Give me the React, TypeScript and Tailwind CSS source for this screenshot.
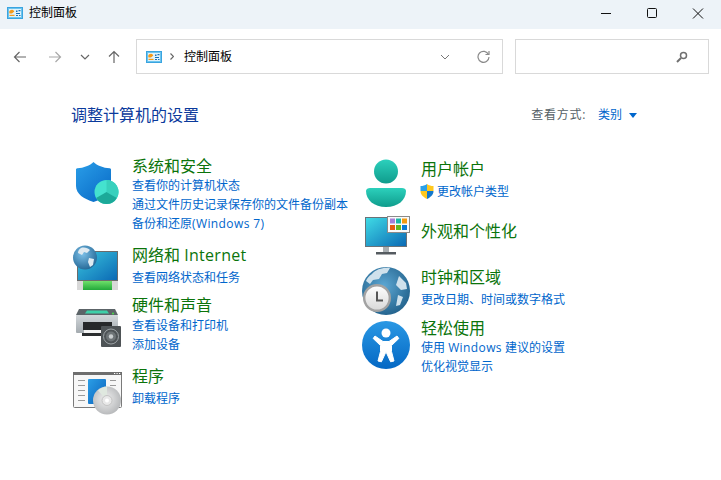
import React from "react";

const FONT = { fontFamily: '"Open Sans", "Noto Sans CJK SC", "Noto Sans", sans-serif' };

function CpIcon({ size = 16 }: { size?: number }) {
  return (
    <svg width={size} height={size * 0.75} viewBox="0 0 16 12">
      <rect x="0.5" y="0.5" width="15" height="11" fill="#6cc4ee" stroke="#3aa4e0" />
      <rect x="2" y="2" width="12" height="8" fill="#dff3fc" />
      <path d="M2.500 6.500a2.600 2.600 0 0 1 4.800-2L5 6.500z" fill="#f59a1b" />
      <rect x="2.500" y="7.800" width="5" height="1.200" fill="#f59a1b" />
      <path d="M9 3.500h1.500v1.500H9zM11.500 3h2v1.200h-2zM9 6h4v1H9zM9 8h2v1H9zM12 8h1.500v1H12z" fill="#1a6fb8" />
    </svg>
  );
}

function Shield() {
  return (
    <svg width="43" height="43" viewBox="0 0 43 43">
      <defs>
        <linearGradient id="sh" x1="0" y1="0" x2="0.8" y2="1">
          <stop offset="0" stopColor="#2a9ee8" />
          <stop offset="1" stopColor="#0a6cc8" />
        </linearGradient>
      </defs>
      <path d="M17.500 0c3.500 3.500 10 6 16 6.200.8 0 1.500.6 1.500 1.400V26c0 6-8 11-17.500 14C8 37 0 32 0 24V7.600C0 6.800.7 6.200 1.500 6.200 7.500 6 14 3.500 17.500 0z" fill="url(#sh)" />
      <circle cx="30.500" cy="30" r="12" fill="#44e2cf" />
      <path d="M30.500 30V18a12 12 0 0 1 10.400 18z" fill="#38d0bd" />
      <path d="M30.500 30l10.400 6a12 12 0 0 1-20.800 0z" fill="#1ca999" />
    </svg>
  );
}

function Network() {
  return (
    <svg width="48" height="46" viewBox="0 0 48 46">
      <defs>
        <linearGradient id="nw" x1="0" y1="0" x2="1" y2="1">
          <stop offset="0" stopColor="#3bc6de" />
          <stop offset="1" stopColor="#0a68b4" />
        </linearGradient>
        <linearGradient id="ng" x1="0" y1="0" x2="0" y2="1">
          <stop offset="0" stopColor="#6ee06a" />
          <stop offset="1" stopColor="#22a83a" />
        </linearGradient>
        <radialGradient id="gl" cx="0.4" cy="0.35" r="0.75">
          <stop offset="0" stopColor="#7cc0e8" />
          <stop offset="1" stopColor="#1c5f8e" />
        </radialGradient>
      </defs>
      <rect x="4.500" y="6.500" width="40" height="29" fill="url(#nw)" stroke="#6b6b6b" />
      <rect x="4" y="36" width="41" height="9" fill="url(#ng)" />
      <rect x="4" y="36" width="6" height="9" fill="#d8d8d8" />
      <rect x="39" y="36" width="6" height="9" fill="#d8d8d8" />
      <circle cx="12" cy="12.500" r="12" fill="url(#gl)" />
      <path d="M8 3c3-1 7 0 9 2l-3 3-3-1-2 3-4-2c0-2 1-4 3-5zM16 13l5 1-1 6-3 2-2-5z" fill="#dfeaf1" />
    </svg>
  );
}

function Hardware() {
  return (
    <svg width="46" height="38" viewBox="0 0 46 38">
      <defs>
        <linearGradient id="pb" x1="0" y1="0" x2="0" y2="1">
          <stop offset="0" stopColor="#d2d7da" />
          <stop offset="1" stopColor="#a4abb0" />
        </linearGradient>
      </defs>
      <path d="M3 0h36l3 6H0z" fill="#5c6468" />
      <path d="M11 1.500h20l2 3H9z" fill="#3ed0a8" />
      <circle cx="37" cy="4.500" r="1" fill="#48e048" />
      <rect x="0" y="6" width="42" height="18" rx="1" fill="url(#pb)" />
      <rect x="7" y="13" width="29" height="8" fill="#26282a" />
      <rect x="8" y="21" width="26" height="3" fill="#f4f4f4" />
      <rect x="6" y="24" width="30" height="3" fill="#2c2e30" />
      <rect x="25" y="17" width="20" height="21" rx="1" fill="#4e5356" />
      <circle cx="35" cy="27.500" r="7.500" fill="none" stroke="#9da3a6" />
      <circle cx="35" cy="27.500" r="5" fill="#6e7477" />
      <circle cx="35" cy="27.500" r="2.200" fill="#c9cdcf" />
    </svg>
  );
}

function Programs() {
  return (
    <svg width="49" height="43" viewBox="0 0 49 43">
      <defs>
        <linearGradient id="pg" x1="0" y1="0" x2="1" y2="1">
          <stop offset="0" stopColor="#2b9ee6" />
          <stop offset="1" stopColor="#0a62bc" />
        </linearGradient>
        <radialGradient id="cd" cx="0.45" cy="0.45" r="0.6">
          <stop offset="0" stopColor="#f0f0f0" />
          <stop offset="1" stopColor="#b4b6b8" />
        </radialGradient>
      </defs>
      <rect x="0.500" y="0.500" width="48" height="35" rx="1" fill="#f7f7f7" stroke="#7a7a7a" />
      <rect x="0" y="0" width="49" height="3" fill="#6e6e6e" />
      <rect x="41" y="1" width="1.200" height="1" fill="#fff" />
      <rect x="43.500" y="1" width="1.200" height="1" fill="#fff" />
      <rect x="46" y="1" width="1.200" height="1" fill="#fff" />
      {[8, 13, 18, 23, 28].map((y) => (
        <rect key={y} x="5" y={y} width="7" height="1" fill="#9a9a9a" />
      ))}
      {[8, 13, 18].map((y) => (
        <rect key={y} x="37" y={y} width="6" height="1" fill="#9a9a9a" />
      ))}
      <rect x="15" y="7" width="18" height="25" rx="1" fill="url(#pg)" />
      <circle cx="34" cy="28.500" r="14" fill="url(#cd)" />
      <path d="M34 28.500l-9-10a14 14 0 0 1 9-4z" fill="#dfe8df" />
      <circle cx="34" cy="28.500" r="5" fill="#e8e8e8" stroke="#c4c4c4" />
      <circle cx="34" cy="28.500" r="2" fill="#fff" />
    </svg>
  );
}

function User() {
  return (
    <svg width="40" height="49" viewBox="0 0 40 49">
      <defs>
        <linearGradient id="us" x1="0" y1="0" x2="0" y2="1">
          <stop offset="0" stopColor="#2cd0bc" />
          <stop offset="1" stopColor="#0f9c8c" />
        </linearGradient>
      </defs>
      <circle cx="20" cy="12.500" r="12" fill="url(#us)" />
      <path d="M4 29h32c2 0 4 1 4 3 0 9-8 16-20 16S0 41 0 32c0-2 2-3 4-3z" fill="url(#us)" />
    </svg>
  );
}

function UacShield() {
  return (
    <svg width="14" height="15" viewBox="0 0 14 15" className="shrink-0">
      <path d="M7 0C5 1.500 3 2 .5 2v5H7z" fill="#2aa0e8" />
      <path d="M7 0c2 1.500 4 2 6.500 2v5H7z" fill="#ffc81e" />
      <path d="M.5 7C.5 11 4 13.500 7 15V7z" fill="#ffc81e" />
      <path d="M13.500 7c0 4-3.500 6.500-6.500 8V7z" fill="#1478cc" />
    </svg>
  );
}

function Monitor() {
  return (
    <svg width="46" height="39" viewBox="0 0 46 39">
      <defs>
        <linearGradient id="mn" x1="0" y1="0" x2="1" y2="1">
          <stop offset="0" stopColor="#40dce6" />
          <stop offset="1" stopColor="#0a68b4" />
        </linearGradient>
      </defs>
      <rect x="0.500" y="1.500" width="41" height="29" fill="url(#mn)" stroke="#6a7278" />
      <rect x="18" y="31" width="6" height="5" fill="#a8aeb2" />
      <rect x="11" y="36" width="20" height="2.500" fill="#555b60" />
      <rect x="22.500" y="0.500" width="22" height="16" fill="#fafafa" stroke="#8a8a8a" />
      <rect x="25" y="2.500" width="5" height="5" fill="#a67fd8" />
      <rect x="31" y="2.500" width="5" height="5" fill="#1cb8a8" />
      <rect x="37" y="2.500" width="5" height="5" fill="#f39a10" />
      <rect x="25" y="9" width="5" height="5" fill="#e85c10" />
      <rect x="31" y="9" width="5" height="5" fill="#66b81c" />
      <rect x="37" y="9" width="5" height="5" fill="#0a7ad4" />
    </svg>
  );
}

function Clock() {
  return (
    <svg width="48" height="48" viewBox="0 0 48 48">
      <defs>
        <radialGradient id="gb" cx="0.45" cy="0.4" r="0.7">
          <stop offset="0" stopColor="#5da8d4" />
          <stop offset="1" stopColor="#1c5a84" />
        </radialGradient>
        <linearGradient id="cf" x1="0" y1="0" x2="0" y2="1">
          <stop offset="0" stopColor="#ffffff" />
          <stop offset="1" stopColor="#d8d8d8" />
        </linearGradient>
      </defs>
      <circle cx="24" cy="24" r="24" fill="url(#gb)" />
      <path d="M10 7c4-5 12-7 18-6l-3 5-5 1-3 5-6 1-3 4-4-3c1-3 3-5 6-7zM37 9l7 7 1 6-6 1-5-5zM36 28l5 2-3 8-4 1z" fill="#cfe1ec" />
      <circle cx="15" cy="31" r="12.800" fill="url(#cf)" stroke="#a2a2a2" strokeWidth="2.400" />
      <path d="M15 24.500v9h6" fill="none" stroke="#555" strokeWidth="2" />
    </svg>
  );
}

function Access() {
  return (
    <svg width="48" height="48" viewBox="0 0 48 48">
      <defs>
        <linearGradient id="ac" x1="0" y1="0" x2="0" y2="1">
          <stop offset="0" stopColor="#2a98e4" />
          <stop offset="1" stopColor="#0468c4" />
        </linearGradient>
      </defs>
      <circle cx="24" cy="24" r="24" fill="url(#ac)" />
      <circle cx="24" cy="12" r="4.500" fill="#fff" />
      <path d="M13 15l8 5.500h6l8-5.500 1.800 2.500-7.300 7v6l2.500 9.500-3.400.8-4.600-10-4.600 10-3.400-.8 2.500-9.500v-6l-7.300-7z" fill="#fff" stroke="#fff" strokeLinejoin="round" strokeWidth="1" />
    </svg>
  );
}

const A = ({ children }: { children: React.ReactNode }) => (
  <div className="h-[19px] text-[12px] leading-[19px] whitespace-nowrap text-[#0066cc]">{children}</div>
);

const H = ({ children }: { children: React.ReactNode }) => (
  <div className="h-[22px] text-[16px] leading-[22px] whitespace-nowrap text-[#0b740b]">{children}</div>
);

function Item({
  icon,
  title,
  links,
  className,
  linksClass,
}: {
  icon: React.ReactNode;
  title: React.ReactNode;
  links: React.ReactNode[];
  className: string;
  linksClass?: string;
}) {
  return (
    <div className={`flex ${className}`}>
      <div className="flex w-[61px] shrink-0 justify-start">{icon}</div>
      <div>
        <H>{title}</H>
        <div className={linksClass}>
          {links.map((l, i) => (
            <A key={i}>{l}</A>
          ))}
        </div>
      </div>
    </div>
  );
}

export default function App() {
  return (
    <div className="flex h-[480px] w-[721px] flex-col overflow-hidden bg-white" style={FONT}>
      <div className="flex h-[29px] items-center bg-[#edf3f8] pl-[7px]">
        <div className="-mt-[3px] flex items-center">
          <CpIcon />
          <span className="ml-[6px] text-[12px] leading-[16px] text-black">控制面板</span>
        </div>
        <div className="ml-auto flex items-center">
          <svg width="46" height="29" viewBox="0 0 46 29">
            <path d="M18 13.500h10" stroke="#111" strokeWidth="1" />
          </svg>
          <svg width="46" height="29" viewBox="0 0 46 29">
            <rect x="18.500" y="8.500" width="9" height="9" rx="1" fill="none" stroke="#111" />
          </svg>
          <svg width="46" height="29" viewBox="0 0 46 29">
            <path d="M18 8.500l10 10M28 8.500l-10 10" stroke="#111" strokeWidth="1" fill="none" />
          </svg>
        </div>
      </div>

      <div className="mt-[10px] flex h-[35px] items-center">
        <div className="ml-[13px] flex w-[123px] items-center">
          <svg width="14" height="14" viewBox="0 0 14 14" fill="none" stroke="#666" strokeWidth="1.200">
            <path d="M13 7H1.500M6.500 2l-5 5 5 5" />
          </svg>
          <svg width="14" height="14" viewBox="0 0 14 14" fill="none" stroke="#a8a8a8" strokeWidth="1.200" className="ml-[21px]">
            <path d="M1 7h11.500M7.500 2l5 5-5 5" />
          </svg>
          <svg width="10" height="6" viewBox="0 0 10 6" fill="none" stroke="#666" strokeWidth="1.200" className="ml-[18px]">
            <path d="M1 1l4 4 4-4" />
          </svg>
          <svg width="14" height="14" viewBox="0 0 14 14" fill="none" stroke="#666" strokeWidth="1.200" className="ml-[17px]">
            <path d="M7 13V1.500M2 6.500l5-5 5 5" />
          </svg>
        </div>
        <div className="flex h-[35px] w-[367px] items-center border border-[#d9d9d9] pl-[9px]">
          <CpIcon />
          <svg width="4" height="7" viewBox="0 0 4 7" className="ml-[8px]" fill="none" stroke="#666" strokeWidth="1.200">
            <path d="M.5.500l3 3-3 3" />
          </svg>
          <span className="ml-[10px] text-[12px] leading-[16px] text-black">控制面板</span>
          <svg width="10" height="6" viewBox="0 0 10 6" fill="none" stroke="#777" strokeWidth="1" className="ml-[208px]">
            <path d="M1 1l4 4 4-4" />
          </svg>
          <svg width="13" height="13" viewBox="0 0 13 13" fill="none" stroke="#8a8a8a" strokeWidth="1.200" className="ml-[27px]">
            <path d="M11.500 4.500A5.500 5.500 0 1 0 12 7" />
            <path d="M8.500 4.500h3.500V1" />
          </svg>
        </div>
        <div className="ml-[12px] flex h-[35px] w-[194px] items-center justify-end border border-[#d9d9d9] pr-[20px]">
          <svg width="12" height="12" viewBox="0 0 12 12" fill="none" stroke="#707070">
            <circle cx="7.500" cy="4.500" r="3" strokeWidth="1.500" />
            <path d="M5 7l-4 4" strokeWidth="2" />
          </svg>
        </div>
      </div>

      <div className="ml-[71px] mt-[30px] flex h-[22px] w-[566px] items-center">
        <span className="text-[16px] leading-[22px] text-[#0b3a9c]">调整计算机的设置</span>
        <span className="ml-auto text-[12px] leading-[16px] tracking-[0.7px] text-[#555f66]">查看方式:</span>
        <span className="ml-[12px] text-[12px] leading-[16px] text-[#0066cc]">类别</span>
        <svg width="8" height="5" viewBox="0 0 8 5" className="ml-[7px]">
          <path d="M0 0h8L4 5z" fill="#0066cc" />
        </svg>
      </div>

      <div className="ml-[71px] mt-[29px] flex">
        <div className="w-[289px]">
          <Item
            className="h-[89px]"
            icon={<div className="mt-[7px] ml-[5px]"><Shield /></div>}
            title="系统和安全"
            linksClass="-mt-[1px]"
            links={[
              "查看你的计算机状态",
              "通过文件历史记录保存你的文件备份副本",
              <>备份和还原<span className="tracking-[0.4px]">(Windows 7)</span></>,
            ]}
          />
          <Item
            className="h-[50px]"
            icon={<div className="mt-[1px] ml-[2px]"><Network /></div>}
            title={<>网络和 <span className="tracking-[0.3px]">Internet</span></>}
            linksClass="mt-[2px]"
            links={["查看网络状态和任务"]}
          />
          <Item
            className="h-[71px]"
            icon={<div className="mt-[15px] ml-[5px]"><Hardware /></div>}
            title="硬件和声音"
            links={["查看设备和打印机", "添加设备"]}
          />
          <Item
            className="h-[60px]"
            icon={<div className="mt-[7px] ml-[2px]"><Programs /></div>}
            title="程序"
            linksClass="mt-[2px]"
            links={["卸载程序"]}
          />
        </div>
        <div>
          <Item
            className="mt-[3px] h-[62px]"
            icon={<div className="mt-[1px] ml-[6px]"><User /></div>}
            title="用户帐户"
            linksClass="mt-[2px]"
            links={[
              <span className="flex items-center gap-[3px] -ml-[1px]" key="u">
                <UacShield />
                更改帐户类型
              </span>,
            ]}
          />
          <Item
            className="h-[46px]"
            icon={<div className="mt-[-4px] ml-[5px]"><Monitor /></div>}
            title="外观和个性化"
            links={[]}
          />
          <Item
            className="h-[51px]"
            icon={<div className="mt-[1px] ml-[2px]"><Clock /></div>}
            title="时钟和区域"
            linksClass="mt-[2px]"
            links={["更改日期、时间或数字格式"]}
          />
          <Item
            className="h-[60px]"
            icon={<div className="mt-[4px] ml-[2px]"><Access /></div>}
            title="轻松使用"
            linksClass="-mt-[1px]"
            links={[
              <>使用 <span className="tracking-[0.4px]">Windows</span> 建议的设置</>,
              "优化视觉显示",
            ]}
          />
        </div>
      </div>
    </div>
  );
}
